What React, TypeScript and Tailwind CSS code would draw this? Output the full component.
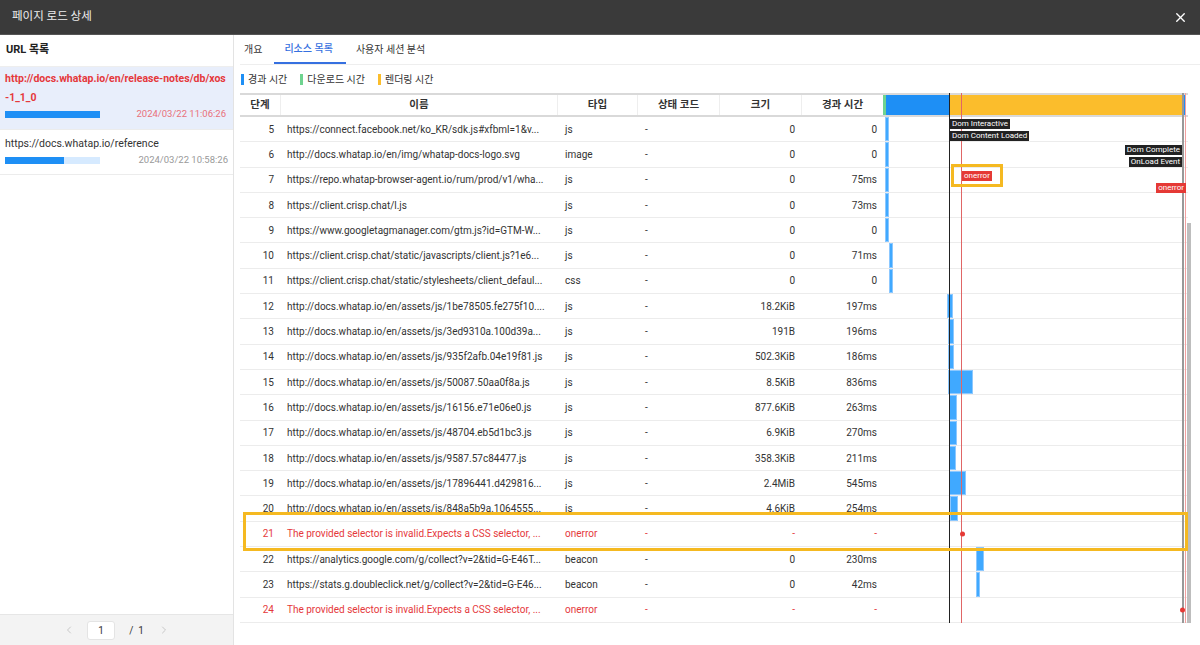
import { X, ChevronLeft, ChevronRight } from "lucide-react"

type Row = {
  step: number
  name: string
  type: string
  status: string
  size: string
  time: string
  error?: boolean
  bar?: { left: number; width: number }
  dot?: number
}

const ROWS: Row[] = [
  { step: 5, name: "https://connect.facebook.net/ko_KR/sdk.js#xfbml=1&v...", type: "js", status: "-", size: "0", time: "0", bar: { left: 2, width: 4 } },
  { step: 6, name: "http://docs.whatap.io/en/img/whatap-docs-logo.svg", type: "image", status: "-", size: "0", time: "0", bar: { left: 2, width: 4 } },
  { step: 7, name: "https://repo.whatap-browser-agent.io/rum/prod/v1/wha...", type: "js", status: "-", size: "0", time: "75ms", bar: { left: 2, width: 4 } },
  { step: 8, name: "https://client.crisp.chat/l.js", type: "js", status: "-", size: "0", time: "73ms", bar: { left: 2, width: 4 } },
  { step: 9, name: "https://www.googletagmanager.com/gtm.js?id=GTM-W...", type: "js", status: "-", size: "0", time: "0", bar: { left: 2, width: 4 } },
  { step: 10, name: "https://client.crisp.chat/static/javascripts/client.js?1e6...", type: "js", status: "-", size: "0", time: "71ms", bar: { left: 6, width: 4 } },
  { step: 11, name: "https://client.crisp.chat/static/stylesheets/client_defaul...", type: "css", status: "-", size: "0", time: "0", bar: { left: 6, width: 4 } },
  { step: 12, name: "http://docs.whatap.io/en/assets/js/1be78505.fe275f10....", type: "js", status: "-", size: "18.2KiB", time: "197ms", bar: { left: 64, width: 6 } },
  { step: 13, name: "http://docs.whatap.io/en/assets/js/3ed9310a.100d39a...", type: "js", status: "-", size: "191B", time: "196ms", bar: { left: 65, width: 6 } },
  { step: 14, name: "http://docs.whatap.io/en/assets/js/935f2afb.04e19f81.js", type: "js", status: "-", size: "502.3KiB", time: "186ms", bar: { left: 65, width: 6 } },
  { step: 15, name: "http://docs.whatap.io/en/assets/js/50087.50aa0f8a.js", type: "js", status: "-", size: "8.5KiB", time: "836ms", bar: { left: 65, width: 25 } },
  { step: 16, name: "http://docs.whatap.io/en/assets/js/16156.e71e06e0.js", type: "js", status: "-", size: "877.6KiB", time: "263ms", bar: { left: 66, width: 8 } },
  { step: 17, name: "http://docs.whatap.io/en/assets/js/48704.eb5d1bc3.js", type: "js", status: "-", size: "6.9KiB", time: "270ms", bar: { left: 66, width: 8 } },
  { step: 18, name: "http://docs.whatap.io/en/assets/js/9587.57c84477.js", type: "js", status: "-", size: "358.3KiB", time: "211ms", bar: { left: 66, width: 7 } },
  { step: 19, name: "http://docs.whatap.io/en/assets/js/17896441.d429816...", type: "js", status: "-", size: "2.4MiB", time: "545ms", bar: { left: 66, width: 17 } },
  { step: 20, name: "http://docs.whatap.io/en/assets/js/848a5b9a.1064555...", type: "js", status: "-", size: "4.6KiB", time: "254ms", bar: { left: 67, width: 8 } },
  { step: 21, name: "The provided selector is invalid.Expects a CSS selector, ...", type: "onerror", status: "-", size: "-", time: "-", error: true, dot: 79 },
  { step: 22, name: "https://analytics.google.com/g/collect?v=2&tid=G-E46T...", type: "beacon", status: "-", size: "0", time: "230ms", bar: { left: 93, width: 8 } },
  { step: 23, name: "https://stats.g.doubleclick.net/g/collect?v=2&tid=G-E46...", type: "beacon", status: "-", size: "0", time: "42ms", bar: { left: 93, width: 4 } },
  { step: 24, name: "The provided selector is invalid.Expects a CSS selector, ...", type: "onerror", status: "-", size: "-", time: "-", error: true, dot: 299 },
]

function Legend({ color, label }: { color: string; label: string }) {
  return (
    <div className="flex items-center gap-[4px]">
      <span className={`h-[11px] w-[3px] ${color}`} />
      <span>{label}</span>
    </div>
  )
}

function UrlItem({
  url,
  date,
  fill,
  active,
}: {
  url: string
  date: string
  fill: number
  active?: boolean
}) {
  return (
    <div
      className={
        active
          ? "border-b border-[#ececec] bg-[#e8eefb] pt-[2px] pr-[7px] pb-[8px] pl-[5px]"
          : "border-b border-[#ececec] px-[5px] pt-[4px] pb-[7px]"
      }
    >
      <div
        className={
          active
            ? "text-[10.5px] leading-[19px] font-bold break-all text-[#e5383b]"
            : "text-[10.5px] leading-[19px] text-[#333]"
        }
      >
        {url}
      </div>
      <div className="flex h-[14px] items-center justify-between">
        <div className="h-[7px] w-[95px] bg-[#d6eaff]">
          <div className="h-full bg-[#1e8ff5]" style={{ width: `${fill}%` }} />
        </div>
        <span className={active ? "text-[9.5px] text-[#e8707a]" : "text-[9.5px] text-[#999]"}>{date}</span>
      </div>
    </div>
  )
}

export default function App() {
  return (
    <div className="flex h-[645px] w-[1200px] flex-col overflow-hidden bg-white font-[Roboto,'Noto_Sans_CJK_KR',sans-serif] text-[#333]">
      <div className="flex h-[35px] shrink-0 items-center justify-between border-b border-[#555] bg-[#3a3a3a] px-[12px]">
        <span className="text-[11.5px] text-[#eee]">페이지 로드 상세</span>
        <X className="h-[15px] w-[15px] text-white" strokeWidth={2.2} />
      </div>

      <div className="flex min-h-0 flex-1">
        {/* URL list */}
        <div className="flex w-[234px] shrink-0 flex-col border-r border-[#e3e3e3]">
          <div className="flex h-[32px] shrink-0 items-center border-b border-[#eee] px-[6px] text-[11px] font-bold text-[#222]">
            URL 목록
          </div>
          <div className="flex-1">
            <UrlItem
              active
              url="http://docs.whatap.io/en/release-notes/db/xos-1_1_0"
              date="2024/03/22 11:06:26"
              fill={100}
            />
            <UrlItem url="https://docs.whatap.io/reference" date="2024/03/22 10:58:26" fill={62} />
          </div>
          <div className="flex h-[31px] shrink-0 items-center justify-center gap-[12px] border-t border-[#e6e6e6] bg-[#f3f3f3] text-[10px]">
            <ChevronLeft className="h-[12px] w-[12px] text-[#c8c8c8]" />
            <div className="flex h-[19px] w-[28px] items-center justify-center rounded-[3px] border border-[#e4e4e4] bg-white">
              1
            </div>
            <span className="px-[2px]">/&nbsp;&nbsp;1</span>
            <ChevronRight className="h-[12px] w-[12px] text-[#c8c8c8]" />
          </div>
        </div>

        {/* detail */}
        <div className="flex min-w-0 flex-1 flex-col pl-[6px]">
          <div className="flex h-[30px] shrink-0 items-stretch border-b border-[#eee] text-[10px]">
            <div className="flex items-center pr-[12px] pl-[4px]">개요</div>
            <div className="flex items-center border-b-2 border-[#3670e0] pr-[13px] pl-[10px] font-medium text-[#3670e0]">
              리소스 목록
            </div>
            <div className="flex items-center px-[10px]">사용자 세션 분석</div>
          </div>

          <div className="flex h-[28px] shrink-0 items-center gap-[13px] pl-[1px] text-[10px]">
            <Legend color="bg-[#1e8ff5]" label="경과 시간" />
            <Legend color="bg-[#6fd38f]" label="다운로드 시간" />
            <Legend color="bg-[#fbbd2c]" label="렌더링 시간" />
          </div>

          <div className="relative w-[948px] text-[10px]">
            <div className="flex h-[24px] border-t-2 border-b-2 border-[#d9d9d9] text-[10.5px] font-bold">
              <div className="flex w-[40px] items-center justify-center">단계</div>
              <div className="flex w-[277px] items-center justify-center border-l border-[#eee]">이름</div>
              <div className="flex w-[80px] items-center justify-center border-l border-[#eee]">타입</div>
              <div className="flex w-[82px] items-center justify-center border-l border-[#eee]">상태 코드</div>
              <div className="flex w-[82px] items-center justify-center border-l border-[#eee]">크기</div>
              <div className="flex w-[82px] items-center justify-center border-l border-[#eee]">경과 시간</div>
              <div className="flex flex-1 items-stretch pr-[2px]">
                <div className="w-[3px] bg-[#6fd38f]" />
                <div className="w-[63px] bg-[#1e8ff5]" />
                <div className="flex-1 bg-[#fbbd2c]" />
                <div className="w-[3px] bg-[#1e8ff5]" />
              </div>
            </div>

            {ROWS.map((r) => (
              <div
                key={r.step}
                className={`flex h-[25.3px] items-center border-b border-[#ececec] ${r.error ? "text-[#e5383b]" : ""}`}
              >
                <div className="w-[40px] pr-[6px] text-right">{r.step}</div>
                <div className="w-[277px] truncate pl-[7px]">{r.name}</div>
                <div className="w-[80px] pl-[8px]">{r.type}</div>
                <div className="w-[82px] pl-[8px]">{r.status}</div>
                <div className="w-[82px] pr-[6px] text-right">{r.size}</div>
                <div className="w-[82px] pr-[6px] text-right">{r.time}</div>
                <div className="relative mr-[2px] h-full flex-1">
                  {r.bar && (
                    <div
                      className="absolute top-0 bottom-0 border border-[#8cc8ff] bg-[#40a9ff]"
                      style={{ left: r.bar.left, width: r.bar.width }}
                    />
                  )}
                  {r.dot !== undefined && (
                    <div
                      className="absolute top-1/2 z-10 h-[5px] w-[5px] -translate-y-1/2 rounded-full bg-[#e53935]"
                      style={{ left: r.dot - 2 }}
                    />
                  )}
                </div>
              </div>
            ))}

            {/* timeline markers */}
            <div className="pointer-events-none absolute top-0 bottom-0 left-[709px] w-px bg-[#222]" />
            <div className="pointer-events-none absolute top-0 bottom-0 left-[721px] w-px bg-[#e06666]" />
            <div className="pointer-events-none absolute top-0 bottom-0 left-[942px] w-[2px] bg-[#999]" />
            <div className="pointer-events-none absolute top-0 bottom-0 left-[945px] w-px bg-[#f3a0a0]" />
            <div className="absolute top-[130px] bottom-0 left-[947px] w-[4px] bg-[#bdbdbd]" />

            <div className="absolute top-[26px] left-[710px] bg-[#222] px-[2px] text-[8px] leading-[10px] text-white">
              Dom Interactive
            </div>
            <div className="absolute top-[38px] left-[710px] bg-[#222] px-[2px] text-[8px] leading-[10px] text-white">
              Dom Content Loaded
            </div>
            <div className="absolute top-[52px] right-[6px] bg-[#222] px-[2px] text-[8px] leading-[10px] text-white">
              Dom Complete
            </div>
            <div className="absolute top-[64px] right-[6px] bg-[#222] px-[2px] text-[8px] leading-[10px] text-white">
              OnLoad Event
            </div>
            <div className="absolute top-[78px] left-[722px] bg-[#e53935] px-[2px] text-[8px] leading-[10px] text-white">
              onerror
            </div>
            <div className="absolute top-[90px] right-[2px] bg-[#e53935] px-[2px] text-[8px] leading-[10px] text-white">
              onerror
            </div>

            {/* highlight boxes */}
            <div className="absolute top-[71px] left-[711px] h-[23px] w-[52px] border-[3px] border-[#f5b921]" />
            <div className="absolute top-[419px] left-[3px] h-[39px] w-[945px] border-[3px] border-[#f5b921]" />
          </div>
        </div>
      </div>
    </div>
  )
}
